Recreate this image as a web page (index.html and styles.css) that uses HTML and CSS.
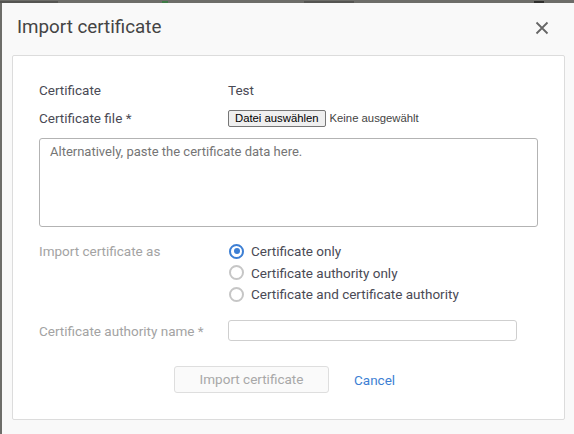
FILE: index.html
```html
<!DOCTYPE html>
<html>
<head>
<meta charset="utf-8">
<link rel="stylesheet" href="styles.css">
</head>
<body>
<div class="backdrop">
  <span class="bg-mark bg-id"></span>
  <span class="bg-mark bg-check"></span>
  <span class="bg-mark bg-name"></span>
  <span class="bg-mark bg-icon"></span>
</div>
<div class="modal">
  <div class="modal-header">
    <h1 class="modal-title">Import certificate</h1>
    <button class="close" aria-label="Close">
      <svg width="14" height="14" viewBox="0 0 14 14"><path d="M1.5 1.5 L12.5 12.5 M12.5 1.5 L1.5 12.5" stroke="#666" stroke-width="1.8" fill="none"/></svg>
    </button>
  </div>
  <div class="panel">
    <div class="row row-cert">
      <div class="label">Certificate</div>
      <div class="value">Test</div>
    </div>
    <div class="row row-file">
      <div class="label">Certificate file <span class="req">*</span></div>
      <div class="value file">
        <span class="file-btn">Datei auswählen</span>
        <span class="file-none">Keine ausgewählt</span>
      </div>
    </div>
    <div class="textarea">Alternatively, paste the certificate data here.</div>
    <div class="row row-import">
      <div class="label muted">Import certificate as</div>
      <div class="radios">
        <div class="radio-item"><span class="radio checked"></span><span>Certificate only</span></div>
        <div class="radio-item"><span class="radio"></span><span>Certificate authority only</span></div>
        <div class="radio-item"><span class="radio"></span><span>Certificate and certificate authority</span></div>
      </div>
    </div>
    <div class="row row-ca">
      <div class="label muted">Certificate authority name *</div>
      <div class="input"></div>
    </div>
    <div class="actions">
      <span class="btn-disabled">Import certificate</span>
      <span class="link">Cancel</span>
    </div>
  </div>
</div>
</body>
</html>
```
FILE: styles.css
```css
html, body {
  margin: 0;
  padding: 0;
}
body {
  width: 574px;
  height: 434px;
  overflow: hidden;
  background: #6d6d69;
  font-family: Roboto, "Noto Sans", sans-serif;
}
.backdrop {
  height: 3px;
  display: flex;
  align-items: flex-end;
}
.bg-mark {
  display: block;
  height: 2px;
  background: #555552;
}
.bg-id {
  width: 58px;
}
.bg-check {
  width: 6px;
  margin-left: 104px;
  background: #3f7a46;
}
.bg-name {
  width: 50px;
  margin-left: 136px;
}
.bg-icon {
  width: 10px;
  margin-left: 180px;
  background: #2f2f2d;
}
.modal {
  margin-left: 2px;
  height: 431px;
  background: #f9f9f9;
  padding: 0 9px 0 10px;
  box-sizing: border-box;
}
.modal-header {
  height: 52px;
  display: flex;
  align-items: flex-start;
  justify-content: space-between;
}
.modal-title {
  margin: 12px 0 0 5px;
  font-size: 18.8px;
  font-weight: 400;
  color: #444;
  line-height: 24px;
}
.close {
  margin: 18px 16px 0 0;
  padding: 0;
  border: 0;
  background: none;
  width: 14px;
  height: 14px;
  display: block;
}
.close svg {
  display: block;
}
.panel {
  background: #fff;
  border: 1px solid #dcdcdc;
  border-radius: 2px;
  height: 365px;
  box-sizing: border-box;
  padding: 0 0 0 26px;
  font-size: 13.5px;
  color: #4a4a55;
}
.row {
  display: flex;
  align-items: flex-start;
}
.label {
  width: 189px;
  flex: none;
  line-height: 18px;
}
.value {
  line-height: 18px;
}
.row-cert {
  margin-top: 25px;
}
.row-file {
  margin-top: 10px;
}
.file {
  display: flex;
  align-items: center;
  font-family: "Liberation Sans", Arial, sans-serif;
  font-size: 11.3px;
}
.file-btn {
  box-sizing: border-box;
  height: 17px;
  line-height: 15px;
  padding: 0 6px;
  border: 1px solid #767676;
  border-radius: 2px;
  background: #efefef;
  color: #000;
}
.file-none {
  margin-left: 4px;
  color: #444;
}
.textarea {
  margin-top: 11px;
  width: 499px;
  height: 89px;
  box-sizing: border-box;
  border: 1px solid #b3b3b3;
  border-radius: 3px;
  padding: 5px 10px;
  line-height: 16px;
  font-size: 13px;
  color: #757575;
}
.row-import {
  margin-top: 15px;
}
.muted {
  color: #a3a3a3;
}
.radios {
  display: flex;
  flex-direction: column;
  gap: 3.5px;
}
.radio-item {
  display: flex;
  align-items: center;
  height: 18px;
  margin-left: 1px;
}
.radio {
  box-sizing: border-box;
  width: 15px;
  height: 15px;
  border: 2px solid #c6c6c6;
  border-radius: 50%;
  margin-right: 7px;
  position: relative;
  flex: none;
}
.radio.checked {
  border-color: #3d7fd4;
}
.radio.checked::after {
  content: "";
  position: absolute;
  left: 2.5px;
  top: 2.5px;
  width: 6px;
  height: 6px;
  border-radius: 50%;
  background: #3d7fd4;
}
.row-ca {
  margin-top: 17px;
  align-items: center;
}
.input {
  width: 289px;
  height: 21px;
  box-sizing: border-box;
  border: 1px solid #cfcfcf;
  border-radius: 3px;
}
.actions {
  margin-top: 25px;
  display: flex;
  align-items: center;
  padding-left: 135px;
}
.btn-disabled {
  box-sizing: border-box;
  width: 155px;
  height: 27px;
  line-height: 25px;
  text-align: center;
  border: 1px solid #dedede;
  border-radius: 3px;
  background: #fafafa;
  color: #a8a8a8;
  font-size: 13.5px;
}
.link {
  margin-left: 25px;
  color: #3d7fd4;
  font-size: 13.5px;
}
```
